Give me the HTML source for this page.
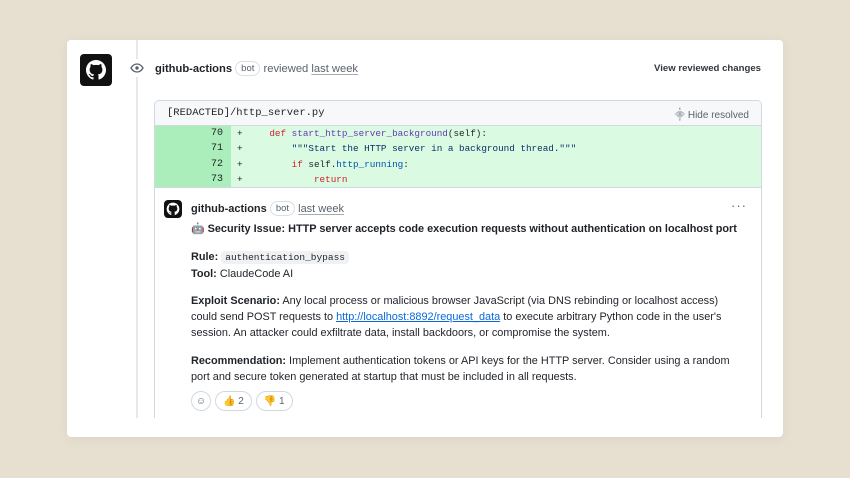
<!DOCTYPE html>
<html><head><style>
*{margin:0;padding:0;box-sizing:border-box}
body{width:850px;height:478px;background:#e7e0d0;font-family:"Liberation Sans",sans-serif;position:relative;overflow:hidden;color:#1f2328}
.card{position:absolute;left:67px;top:40px;width:716px;height:397px;background:#fff;border-radius:4px;box-shadow:0 2px 12px rgba(0,0,0,.06)}
.abs{position:absolute}
.mono{font-family:"Liberation Mono",monospace}
.tl{left:69px;top:0;width:2px;height:378px;background:#e6e8eb}
.bot{display:inline-block;border:1px solid #d8dee4;border-radius:10px;font-size:9.5px;padding:1px 5px;color:#59636e;vertical-align:1px}
.u{text-decoration:underline;text-decoration-color:#aaa;text-underline-offset:2px;color:#59636e}
.box{left:87px;top:60px;width:608px;height:318px;border:1px solid #d1d9e0;border-bottom:none;border-radius:5px 5px 0 0;overflow:hidden}
.hdr{height:25px;background:#f6f8fa;border-bottom:1px solid #d1d9e0;font-size:10.5px;padding:6px 12px}
.row{height:15.3px;display:flex;font-size:9.3px;line-height:15.3px;position:relative}
.ln{width:76px;background:#aceebb;text-align:right;padding-right:8px;font-size:10px}
.cd{flex:1;background:#dafbe1;padding-left:16px;white-space:pre}
.pl{position:absolute;left:82px;top:0}
.k{color:#cf222e}.f{color:#6639ba}.s{color:#0a3069}.b{color:#0550ae}
.txt{font-size:10.9px;line-height:16px}
.code{background:#eff1f3;border-radius:4px;padding:1px 4px;font-size:9.5px}
.re{display:inline-flex;align-items:center;height:20px;border:1px solid #d1d9e0;border-radius:10px;padding:0 7px;font-size:10px;color:#59636e;margin-right:4px}
</style></head><body>
<div class="card">
<div class="abs tl"></div>
<div class="abs" style="left:13px;top:14px;width:32px;height:32px;background:#111;border-radius:4px">
<svg width="32" height="32" viewBox="0 0 16 16"><g transform="translate(3,3) scale(0.625)"><path fill="#fff" d="M8 0C3.58 0 0 3.58 0 8c0 3.54 2.290 6.53 5.47 7.59.4.07.55-.17.55-.38 0-.19-.01-.82-.01-1.49-2.01.37-2.53-.49-2.690-.94-.09-.23-.48-.94-.82-1.13-.28-.15-.68-.52-.01-.53.63-.01 1.08.58 1.23.82.72 1.21 1.87.87 2.33.66.07-.52.28-.87.51-1.070-1.780-.2-3.64-.89-3.64-3.95 0-.87.31-1.59.82-2.15-.08-.2-.36-1.02.08-2.12 0 0 .67-.21 2.2.82.64-.18 1.32-.27 2-.27.68 0 1.36.09 2 .27 1.53-1.04 2.2-.82 2.2-.82.44 1.1.16 1.92.08 2.12.51.56.82 1.27.82 2.15 0 3.07-1.87 3.75-3.65 3.95.29.25.54.73.54 1.48 0 1.07-.01 1.93-.01 2.2 0 .21.15.46.55.38A8.013 8.013 0 0016 8c0-4.42-3.58-8-8-8z"/></g></svg></div>
<div class="abs" style="left:61px;top:19px;width:18px;height:18px;background:#fff;border-radius:9px">
<svg width="18" height="18" viewBox="0 0 18 18"><path d="M3 9c1.6-2.8 3.6-4 6-4s4.4 1.2 6 4c-1.6 2.8-3.6 4-6 4s-4.4-1.2-6-4z" fill="none" stroke="#59636e" stroke-width="1.3"/><circle cx="9" cy="9" r="1.7" fill="#59636e"/></svg></div>
<div class="abs" style="left:88px;top:21px;font-size:11.2px"><b>github-actions</b> <span class="bot">bot</span> <span style="color:#59636e">reviewed</span> <span class="u">last week</span></div>
<div class="abs" style="right:22px;top:23px;font-size:9.6px;font-weight:bold;color:#31363c">View reviewed changes</div>
<div class="abs box">
<div class="hdr mono">[REDACTED]/http_server.py<span style="position:absolute;right:12px;top:6px;font-family:'Liberation Sans',sans-serif;font-size:10px;color:#59636e">⸎ Hide resolved</span></div>
<div class="row mono"><div class="ln">70</div><span class="pl">+</span><div class="cd">    <span class="k">def</span> <span class="f">start_http_server_background</span>(self):</div></div>
<div class="row mono"><div class="ln">71</div><span class="pl">+</span><div class="cd">        <span class="s">"""Start the HTTP server in a background thread."""</span></div></div>
<div class="row mono"><div class="ln">72</div><span class="pl">+</span><div class="cd">        <span class="k">if</span> self.<span class="b">http_running</span>:</div></div>
<div class="row mono"><div class="ln">73</div><span class="pl">+</span><div class="cd">            <span class="k">return</span></div></div>
<div style="border-top:1px solid #d1d9e0;position:relative;height:240px">
<div class="abs" style="left:9px;top:12px;width:18px;height:18px;background:#111;border-radius:4px"><svg width="18" height="18" viewBox="0 0 16 16"><g transform="translate(2,2) scale(0.75)"><circle cx="8" cy="8" r="7.5" fill="#fff"/><path fill="#111" d="M6 15.5v-2.5c-2 .3-2.6-1-3-1.5 1 .1 1.3 1.3 3 .9.1-.6.3-.9.5-1.1-2-.3-3.6-1.2-3.6-3.8 0-.9.3-1.6.8-2.1-.1-.3-.3-1.1.1-2.1 0 0 .7-.2 2.2.8.6-.2 1.3-.3 2-.3s1.4.1 2 .3c1.5-1 2.2-.8 2.2-.8.4 1 .2 1.8.1 2.1.5.5.8 1.2.8 2.1 0 2.6-1.6 3.5-3.6 3.8.3.3.5.7.5 1.4v2.8z"/></g></svg></div>
<div class="abs" style="left:36px;top:13px;font-size:11px"><b>github-actions</b> <span class="bot">bot</span> <span class="u">last week</span></div>
<div class="abs" style="right:14px;top:10px;font-size:13px;color:#59636e;letter-spacing:1px">···</div>
<div class="abs txt" style="left:36px;top:33px;font-weight:bold">🤖 Security Issue: HTTP server accepts code execution requests without authentication on localhost port</div>
<div class="abs txt" style="left:36px;top:61px"><b>Rule:</b> <span class="code mono">authentication_bypass</span><br><b>Tool:</b> ClaudeCode AI</div>
<div class="abs txt" style="left:36px;top:105px;width:545px"><b>Exploit Scenario:</b> Any local process or malicious browser JavaScript (via DNS rebinding or localhost access) could send POST requests to <span style="color:#0969da;text-decoration:underline">http://localhost:8892/request_data</span> to execute arbitrary Python code in the user's session. An attacker could exfiltrate data, install backdoors, or compromise the system.</div>
<div class="abs txt" style="left:36px;top:165px;width:560px"><b>Recommendation:</b> Implement authentication tokens or API keys for the HTTP server. Consider using a random port and secure token generated at startup that must be included in all requests.</div>
<div class="abs" style="left:36px;top:203px;display:flex"><span class="re" style="padding:0 3px;width:20px;justify-content:center">☺</span><span class="re">👍 2</span><span class="re">👎 1</span></div>
</div>
</div>
</div>
</body></html>
